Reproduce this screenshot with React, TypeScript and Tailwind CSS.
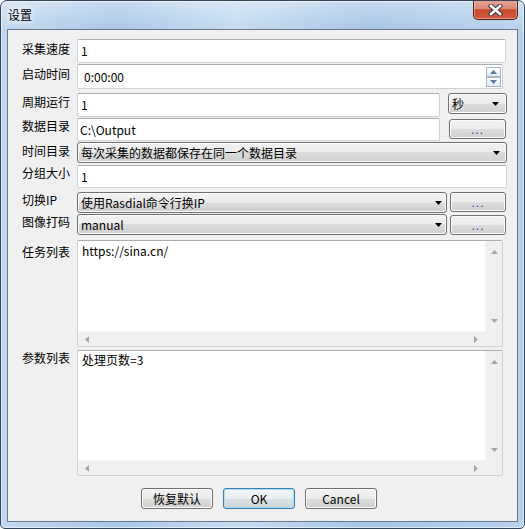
import React from 'react';

const FONT = "font-['Noto_Sans_CJK_SC','Liberation_Sans',sans-serif]";
const BTN_BG =
  'bg-[linear-gradient(to_bottom,#f2f2f2_0%,#ebebeb_50%,#dddddd_50%,#cfcfcf_100%)] shadow-[inset_0_0_0_1px_#fcfcfc]';
const BOX = 'bg-white border border-[#cdd2d9] border-t-[#abadb3] rounded-[2px]';

function DownArrow({ color = '#000' }: { color?: string }) {
  return (
    <svg width="7" height="4" viewBox="0 0 7 4">
      <path d="M0 0h7L3.5 4z" fill={color} />
    </svg>
  );
}

function UpArrow({ color = '#000' }: { color?: string }) {
  return (
    <svg width="7" height="4" viewBox="0 0 7 4">
      <path d="M0 4h7L3.5 0z" fill={color} />
    </svg>
  );
}

function SideArrow({ dir }: { dir: 'left' | 'right' }) {
  return (
    <svg width="4" height="7" viewBox="0 0 4 7">
      <path d={dir === 'left' ? 'M4 0v7L0 3.5z' : 'M0 0v7L4 3.5z'} fill="#a6a6a6" />
    </svg>
  );
}

function Label({ text, pad }: { text: string; pad: string }) {
  return <div className={`w-[55px] shrink-0 leading-[16px] whitespace-nowrap ${pad}`}>{text}</div>;
}

function Combo({ text, className }: { text: string; className: string }) {
  return (
    <div
      className={`flex items-center justify-between border border-[#707070] rounded-[3px] ${BTN_BG} ${className}`}
    >
      <span className="pl-[3px] whitespace-nowrap leading-[16px]">{text}</span>
      <DownArrow />
    </div>
  );
}

function Browse({ className }: { className: string }) {
  return (
    <div
      className={`flex items-center justify-center border border-[#707070] rounded-[3px] text-[12px] tracking-[1px] text-[#3a2aa8] font-['Liberation_Sans',sans-serif] leading-[12px] pt-[2px] ${BTN_BG} ${className}`}
    >
      ...
    </div>
  );
}

function TextArea({ text, className, pad }: { text: string; className: string; pad: string }) {
  return (
    <div className={`flex ${BOX} ${className}`}>
      <div className="flex-1 flex flex-col">
        <div className={`flex-1 pl-[4px] leading-[16px] ${pad}`}>{text}</div>
        <div className="h-[15px] bg-[#f0f0f0] border-t border-[#f7f7f7] flex items-center justify-between px-[7px]">
          <SideArrow dir="left" />
          <SideArrow dir="right" />
        </div>
      </div>
      <div className="w-[17px] flex flex-col">
        <div className="flex-1 bg-[#f0f0f0] border-l border-[#f7f7f7] flex flex-col items-center justify-between pt-[9px] pb-[8px]">
          <UpArrow color="#a6a6a6" />
          <DownArrow color="#a6a6a6" />
        </div>
        <div className="h-[15px] bg-[#f0f0f0]" />
      </div>
    </div>
  );
}

function Button({ text, primary }: { text: string; primary?: boolean }) {
  return (
    <div
      className={`w-[72px] h-[21px] flex items-center justify-center rounded-[3px] border leading-[16px] ${
        primary
          ? 'border-[#3c7fb1] bg-[linear-gradient(to_bottom,#f2f5f7_0%,#ebeef0_50%,#dbe2e6_50%,#cdd6db_100%)] shadow-[inset_0_0_0_1px_#a6e0f7]'
          : `border-[#707070] ${BTN_BG}`
      }`}
    >
      {text}
    </div>
  );
}

function CloseButton() {
  return (
    <div className="-mt-[1px] w-[45px] h-[20px] rounded-b-[5px] border border-t-0 border-[#4e211b] bg-[linear-gradient(to_bottom,#e8a596_0%,#dc8a76_45%,#c8472d_52%,#d35b3f_100%)] shadow-[inset_0_0_0_1px_rgba(255,210,200,0.45)] flex items-center justify-center">
      <svg width="15" height="12" viewBox="0 0 15 12">
        <path d="M3 2l9 8M12 2l-9 8" stroke="#3d3d3d" strokeWidth="4.6" strokeLinecap="square" />
        <path d="M3 2l9 8M12 2l-9 8" stroke="#ffffff" strokeWidth="2.6" strokeLinecap="square" />
      </svg>
    </div>
  );
}

export default function App() {
  return (
    <div
      className={`w-[525px] h-[529px] flex flex-col rounded-t-[7px] rounded-b-[5px] border border-[#34455a] overflow-hidden text-[12px] text-black ${FONT} bg-[linear-gradient(to_right,#c3d8ee_0%,#abc8e6_22%,#c6dbf0_45%,#a8c6e5_70%,#b9d2ec_100%)] shadow-[inset_0_0_0_1px_rgba(255,255,255,0.55)]`}
    >
      <div className="h-[28px] shrink-0 flex items-start justify-between pl-[7px] pr-[6px] bg-[linear-gradient(to_bottom,rgba(255,255,255,0.35),rgba(255,255,255,0))]">
        <span className="mt-[6px] leading-[16px] [text-shadow:0_0_6px_#fff,0_0_10px_#fff]">设置</span>
        <CloseButton />
      </div>

      <div className="flex-1 px-[6px] pb-[6px] flex">
        <div className="flex-1 bg-[#f0f0f0] border border-[#67798d] flex flex-col pt-[9px]">
          <div className="flex items-start pl-[14px] h-[24px]">
            <Label text="采集速度" pad="pt-[2px]" />
            <div className={`w-[429px] h-[24px] flex items-center pl-[3px] ${BOX}`}>1</div>
          </div>

          <div className="flex items-start pl-[14px] h-[25px] mt-[1px]">
            <Label text="启动时间" pad="pt-[2px]" />
            <div className={`w-[426px] h-[25px] flex items-center justify-between pl-[6px] pr-[1px] ${BOX}`}>
              <span>0:00:00</span>
              <div className="flex flex-col mt-[1px]">
                <div className="w-[15px] h-[10px] border border-[#a9b6c6] bg-[linear-gradient(to_bottom,#fdfdfe,#e6ebf1)] flex items-center justify-center">
                  <UpArrow color="#5b79a6" />
                </div>
                <div className="w-[15px] h-[10px] border border-[#a9b6c6] bg-[linear-gradient(to_bottom,#fdfdfe,#e6ebf1)] flex items-center justify-center">
                  <DownArrow color="#5b79a6" />
                </div>
              </div>
            </div>
          </div>

          <div className="flex items-start pl-[14px] h-[24px] mt-[4px]">
            <Label text="周期运行" pad="pt-[1px]" />
            <div className={`w-[363px] h-[24px] flex items-center pl-[3px] ${BOX}`}>1</div>
            <Combo text="秒" className="ml-[8px] w-[59px] h-[21px] pr-[7px]" />
          </div>

          <div className="flex items-start pl-[14px] h-[23px] mt-[1px]">
            <Label text="数据目录" pad="pt-0" />
            <div className={`w-[363px] h-[23px] flex items-center pl-[2px] ${BOX}`}>C:\Output</div>
            <Browse className="ml-[9px] mt-[1px] w-[57px] h-[20px]" />
          </div>

          <div className="flex items-start pl-[14px] h-[21px] mt-[1px]">
            <Label text="时间目录" pad="pt-[1px]" />
            <Combo text="每次采集的数据都保存在同一个数据目录" className="w-[430px] h-[21px] pr-[6px]" />
          </div>

          <div className="flex items-start pl-[14px] h-[23px] mt-[2px]">
            <Label text="分组大小" pad="pt-0" />
            <div className={`w-[430px] h-[23px] flex items-center pl-[3px] ${BOX}`}>1</div>
          </div>

          <div className="flex items-start pl-[14px] h-[21px] mt-[4px]">
            <Label text="切换IP" pad="pt-0" />
            <Combo text="使用Rasdial命令行换IP" className="w-[370px] h-[21px] pr-[4px]" />
            <Browse className="ml-[3px] w-[56px] h-[20px]" />
          </div>

          <div className="flex items-start pl-[14px] h-[21px] mt-[1px]">
            <Label text="图像打码" pad="pt-0" />
            <Combo text="manual" className="w-[370px] h-[21px] pr-[4px]" />
            <Browse className="ml-[3px] mt-[1px] w-[56px] h-[20px]" />
          </div>

          <div className="flex items-start pl-[14px] mt-[5px]">
            <Label text="任务列表" pad="pt-[4px]" />
            <TextArea text="https://sina.cn/" className="w-[426px] h-[107px]" pad="pt-[2px]" />
          </div>

          <div className="flex items-start pl-[14px] mt-[3px]">
            <Label text="参数列表" pad="pt-0" />
            <TextArea text="处理页数=3" className="w-[426px] h-[126px]" pad="pt-[1px]" />
          </div>

          <div className="flex items-start gap-[10px] pl-[133px] mt-[12px]">
            <Button text="恢复默认" />
            <Button text="OK" primary />
            <Button text="Cancel" />
          </div>
        </div>
      </div>
    </div>
  );
}
